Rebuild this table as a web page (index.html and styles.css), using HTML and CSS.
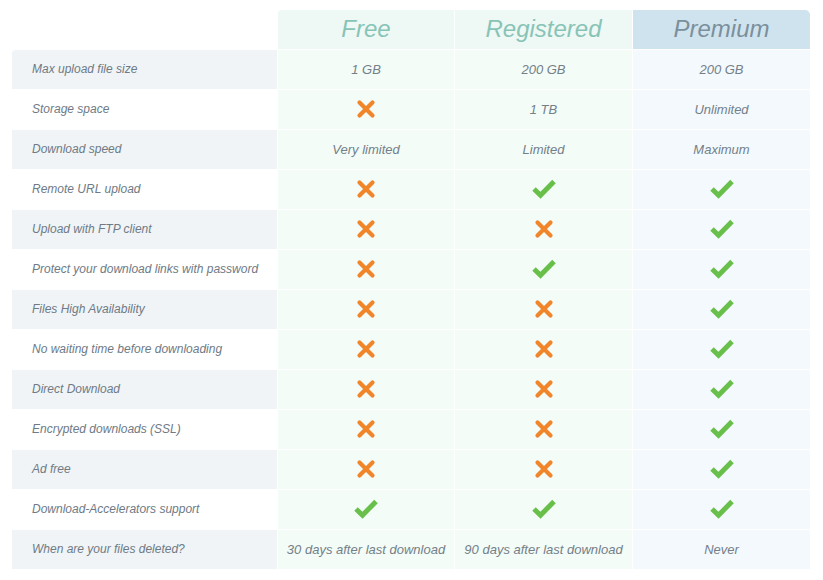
FILE: index.html
```html
<!DOCTYPE html>
<html>
<head>
<meta charset="utf-8">
<link rel="stylesheet" href="styles.css">
</head>
<body>
<svg width="0" height="0" class="defs">
  <defs>
    <symbol id="ok" viewBox="0 0 24 20">
      <polyline points="2,10 8.5,16.2 22,2.5" fill="none" stroke="#68c04a" stroke-width="5" stroke-linecap="butt" stroke-linejoin="miter"/>
    </symbol>
    <symbol id="no" viewBox="0 0 20 20">
      <path d="M3.5 3.5 L16.5 16.5 M16.5 3.5 L3.5 16.5" fill="none" stroke="#f0852a" stroke-width="4.2" stroke-linecap="round"/>
    </symbol>
  </defs>
</svg>
<div class="table">
  <div class="blank"></div>
  <div class="head free">Free</div>
  <div class="head reg">Registered</div>
  <div class="head prem">Premium</div>

  <div class="label odd first">Max upload file size</div>
  <div class="cell free">1 GB</div>
  <div class="cell reg">200 GB</div>
  <div class="cell prem">200 GB</div>

  <div class="label">Storage space</div>
  <div class="cell free"><svg class="no"><use href="#no"/></svg></div>
  <div class="cell reg">1 TB</div>
  <div class="cell prem">Unlimited</div>

  <div class="label odd">Download speed</div>
  <div class="cell free">Very limited</div>
  <div class="cell reg">Limited</div>
  <div class="cell prem">Maximum</div>

  <div class="label">Remote URL upload</div>
  <div class="cell free"><svg class="no"><use href="#no"/></svg></div>
  <div class="cell reg"><svg class="ok"><use href="#ok"/></svg></div>
  <div class="cell prem"><svg class="ok"><use href="#ok"/></svg></div>

  <div class="label odd">Upload with FTP client</div>
  <div class="cell free"><svg class="no"><use href="#no"/></svg></div>
  <div class="cell reg"><svg class="no"><use href="#no"/></svg></div>
  <div class="cell prem"><svg class="ok"><use href="#ok"/></svg></div>

  <div class="label">Protect your download links with password</div>
  <div class="cell free"><svg class="no"><use href="#no"/></svg></div>
  <div class="cell reg"><svg class="ok"><use href="#ok"/></svg></div>
  <div class="cell prem"><svg class="ok"><use href="#ok"/></svg></div>

  <div class="label odd">Files High Availability</div>
  <div class="cell free"><svg class="no"><use href="#no"/></svg></div>
  <div class="cell reg"><svg class="no"><use href="#no"/></svg></div>
  <div class="cell prem"><svg class="ok"><use href="#ok"/></svg></div>

  <div class="label">No waiting time before downloading</div>
  <div class="cell free"><svg class="no"><use href="#no"/></svg></div>
  <div class="cell reg"><svg class="no"><use href="#no"/></svg></div>
  <div class="cell prem"><svg class="ok"><use href="#ok"/></svg></div>

  <div class="label odd">Direct Download</div>
  <div class="cell free"><svg class="no"><use href="#no"/></svg></div>
  <div class="cell reg"><svg class="no"><use href="#no"/></svg></div>
  <div class="cell prem"><svg class="ok"><use href="#ok"/></svg></div>

  <div class="label">Encrypted downloads (SSL)</div>
  <div class="cell free"><svg class="no"><use href="#no"/></svg></div>
  <div class="cell reg"><svg class="no"><use href="#no"/></svg></div>
  <div class="cell prem"><svg class="ok"><use href="#ok"/></svg></div>

  <div class="label odd">Ad free</div>
  <div class="cell free"><svg class="no"><use href="#no"/></svg></div>
  <div class="cell reg"><svg class="no"><use href="#no"/></svg></div>
  <div class="cell prem"><svg class="ok"><use href="#ok"/></svg></div>

  <div class="label">Download-Accelerators support</div>
  <div class="cell free"><svg class="ok"><use href="#ok"/></svg></div>
  <div class="cell reg"><svg class="ok"><use href="#ok"/></svg></div>
  <div class="cell prem"><svg class="ok"><use href="#ok"/></svg></div>

  <div class="label odd">When are your files deleted?</div>
  <div class="cell free">30 days after last download</div>
  <div class="cell reg">90 days after last download</div>
  <div class="cell prem">Never</div>
</div>
</body>
</html>
```
FILE: styles.css
```css
html, body {
  margin: 0;
  padding: 0;
  background: #ffffff;
}
body {
  padding: 10px 0 0 12px;
  font-family: "Liberation Sans", Arial, sans-serif;
}
.defs {
  position: absolute;
  width: 0;
  height: 0;
}
.table {
  display: grid;
  grid-template-columns: 265px 176px 177px 177px;
  grid-auto-rows: 39px;
  gap: 1px;
  width: 798px;
}
.head {
  display: flex;
  align-items: center;
  justify-content: center;
  font-style: italic;
  font-size: 24px;
  padding-bottom: 1px;
}
.head.free, .head.reg {
  background: #eef8f5;
  color: #88c4b6;
}
.head.free {
  border-top-left-radius: 4px;
}
.head.prem {
  background: #cfe3ee;
  color: #7b8f9c;
  border-top-right-radius: 5px;
}
.label {
  display: flex;
  align-items: center;
  padding-left: 20px;
  padding-bottom: 1px;
  font-style: italic;
  font-size: 12px;
  color: #6e7a85;
  background: #ffffff;
}
.label.odd {
  background: #f0f4f7;
}
.label.first {
  border-top-left-radius: 4px;
}
.cell {
  display: flex;
  align-items: center;
  justify-content: center;
  padding-bottom: 1px;
  font-style: italic;
  font-size: 13px;
  color: #737f89;
}
.cell.free, .cell.reg {
  background: #f3fcf7;
}
.cell.prem {
  background: #f4f9fe;
}
.ok {
  width: 24px;
  height: 20px;
}
.no {
  width: 20px;
  height: 20px;
}
```
